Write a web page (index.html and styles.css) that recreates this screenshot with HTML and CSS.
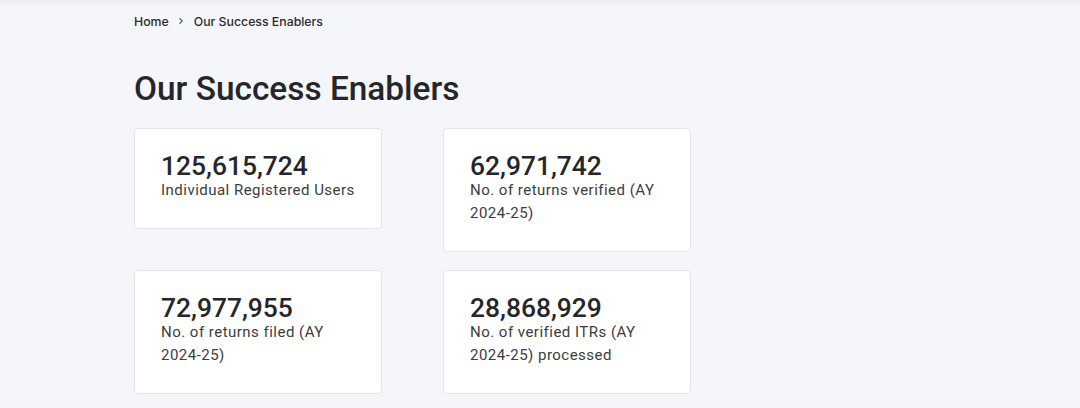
FILE: index.html
```html
<!DOCTYPE html>
<html lang="en">
<head>
<meta charset="utf-8">
<title>Our Success Enablers</title>
<link rel="stylesheet" href="styles.css">
</head>
<body>
<div class="topshade"></div>
<main class="page">
  <nav class="crumbs">
    <span class="crumb">Home</span>
    <svg class="chev" width="8" height="8" viewBox="0 0 8 8"><path d="M2.5 1.2 L5.3 4 L2.5 6.8" fill="none" stroke="#555" stroke-width="1.1"/></svg>
    <span class="crumb">Our Success Enablers</span>
  </nav>
  <h1 class="title">Our Success Enablers</h1>
  <section class="grid">
    <div class="card"><div class="num">125,615,724</div><div class="label">Individual Registered Users</div></div>
    <div class="card"><div class="num">62,971,742</div><div class="label">No. of returns verified (AY 2024-25)</div></div>
    <div class="card"><div class="num">72,977,955</div><div class="label">No. of returns filed (AY 2024-25)</div></div>
    <div class="card"><div class="num">28,868,929</div><div class="label">No. of verified ITRs (AY 2024-25) processed</div></div>
  </section>
</main>
</body>
</html>
```
FILE: styles.css
```css
html, body { margin: 0; padding: 0; }
body {
  background: #f5f6fa;
  font-family: Roboto, "Liberation Sans", sans-serif;
  color: #222;
  width: 1080px;
  height: 408px;
  overflow: hidden;
  position: relative;
}
.topshade {
  position: absolute;
  left: 0; top: 0; right: 0;
  height: 6px;
  background: linear-gradient(#ececf0, rgba(245,246,250,0));
}
.page {
  padding: 12px 0 0 134px;
}
.crumbs {
  display: flex;
  align-items: center;
  font-family: Inter, "Liberation Sans", sans-serif;
  font-size: 12.3px;
  font-weight: 500;
  color: #2b2b2e;
  height: 18px;
}
.chev { margin: 0 9px 0 8px; }
.title {
  margin: 39px 0 0 0;
  font-size: 33.4px;
  font-weight: 500;
  line-height: 40px;
  color: #25262a;
}
.grid {
  margin-top: 19px;
  display: grid;
  grid-template-columns: 248px 248px;
  column-gap: 61px;
  row-gap: 18px;
  align-items: start;
}
.card {
  background: #fff;
  border: 1px solid #e4e5ea;
  border-radius: 4px;
  padding: 24px 20px 26px 26px;
}
.num {
  font-size: 26.4px;
  font-weight: 500;
  line-height: 26px;
  color: #25262a;
}
.label {
  font-size: 15px;
  line-height: 23px;
  letter-spacing: 0.48px;
  color: #3c3c40;
}
```
